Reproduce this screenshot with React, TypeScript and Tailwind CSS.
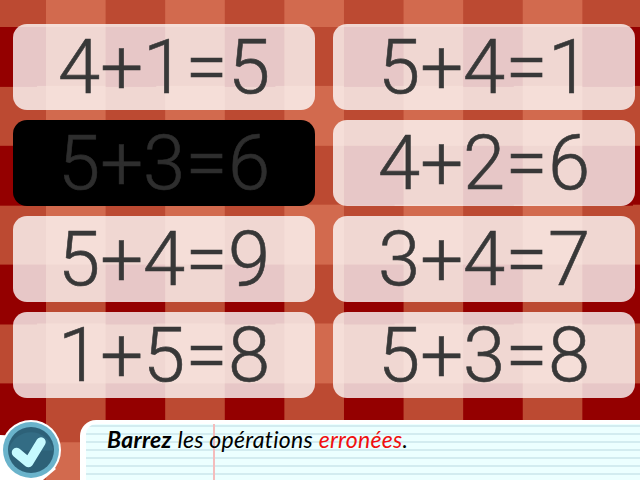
const rows = [
  ["4+1=5", "5+4=1"],
  ["5+3=6", "4+2=6"],
  ["5+4=9", "3+4=7"],
  ["1+5=8", "5+3=8"],
];

function Card({sum, crossed}: {sum: string; crossed?: boolean}) {
  return (
    <div
      className={`flex h-[86px] w-[302px] items-center justify-center rounded-[14px] pb-[1px] font-['Roboto',sans-serif] text-[76px] font-light ${
        crossed
          ? "bg-black text-[#2e2e2e] [-webkit-text-stroke:0.6px_#2e2e2e]"
          : "bg-[rgba(255,255,255,0.78)] text-[#383838] [-webkit-text-stroke:0.6px_#383838]"
      }`}>
      {sum.split("").map((ch, i) => (
        <span key={i} className="w-[42.5px] text-center leading-none">
          {ch}
        </span>
      ))}
    </div>
  );
}

function CheckButton() {
  return (
    <svg className="absolute bottom-0 left-0" width="64" height="64" viewBox="0 0 64 64">
      <path d="M0 19 L0 64 L43 64 L56 53 L20 20 Z" fill="#fff" />
      <circle cx="31" cy="34" r="30" fill="#fff" />
      <circle cx="31" cy="34" r="28" fill="#6ab3cb" />
      <circle cx="31" cy="34" r="23" fill="#2d6178" />
      <path d="M8.5 34.5 A23 23 0 0 1 53.5 34.5 Z" fill="#336c84" />
      <polyline
        points="16.5,36.5 28.5,46.5 41,26"
        fill="none"
        stroke="#c5faff"
        strokeWidth="9.5"
        strokeLinecap="round"
        strokeLinejoin="round"
      />
    </svg>
  );
}

export default function App() {
  return (
    <div className="relative flex h-[480px] w-[640px] flex-col overflow-hidden bg-[conic-gradient(#bc4a32_0_25%,#d26a4e_25%_50%,#bc4a32_50%_75%,#940000_75%_100%)] bg-size-[119.2px_118.8px] bg-position-[-13.6px_27px]">
      <div className="grid grid-cols-[302px_302px] gap-x-[18px] gap-y-[10px] pl-[13px] pt-[24px]">
        {rows.flat().map((sum) => (
          <Card key={sum} sum={sum} crossed={sum === "5+3=6"} />
        ))}
      </div>

      {/* Instruction sheet */}
      <div className="mt-auto ml-[80px] h-[60px] rounded-tl-[16px] bg-white pl-[6px] pt-[4px]">
        <div className="relative h-full rounded-tl-[10px] bg-[#ecffff] bg-[repeating-linear-gradient(to_bottom,transparent_0_1px,#d3ecf0_1px_3px,transparent_3px_8px)]">
          <div className="absolute inset-y-0 left-[127px] w-[2px] bg-[#f4bcbc]" />
          <p className="relative pl-[21px] pt-[3px] font-['Lato',sans-serif] text-[23px] italic leading-[24px] tracking-[0.28px] text-black">
            <b>Barrez</b> les opérations <span className="text-[#f01010]">erronées</span>.
          </p>
        </div>
      </div>

      <CheckButton />
    </div>
  );
}
